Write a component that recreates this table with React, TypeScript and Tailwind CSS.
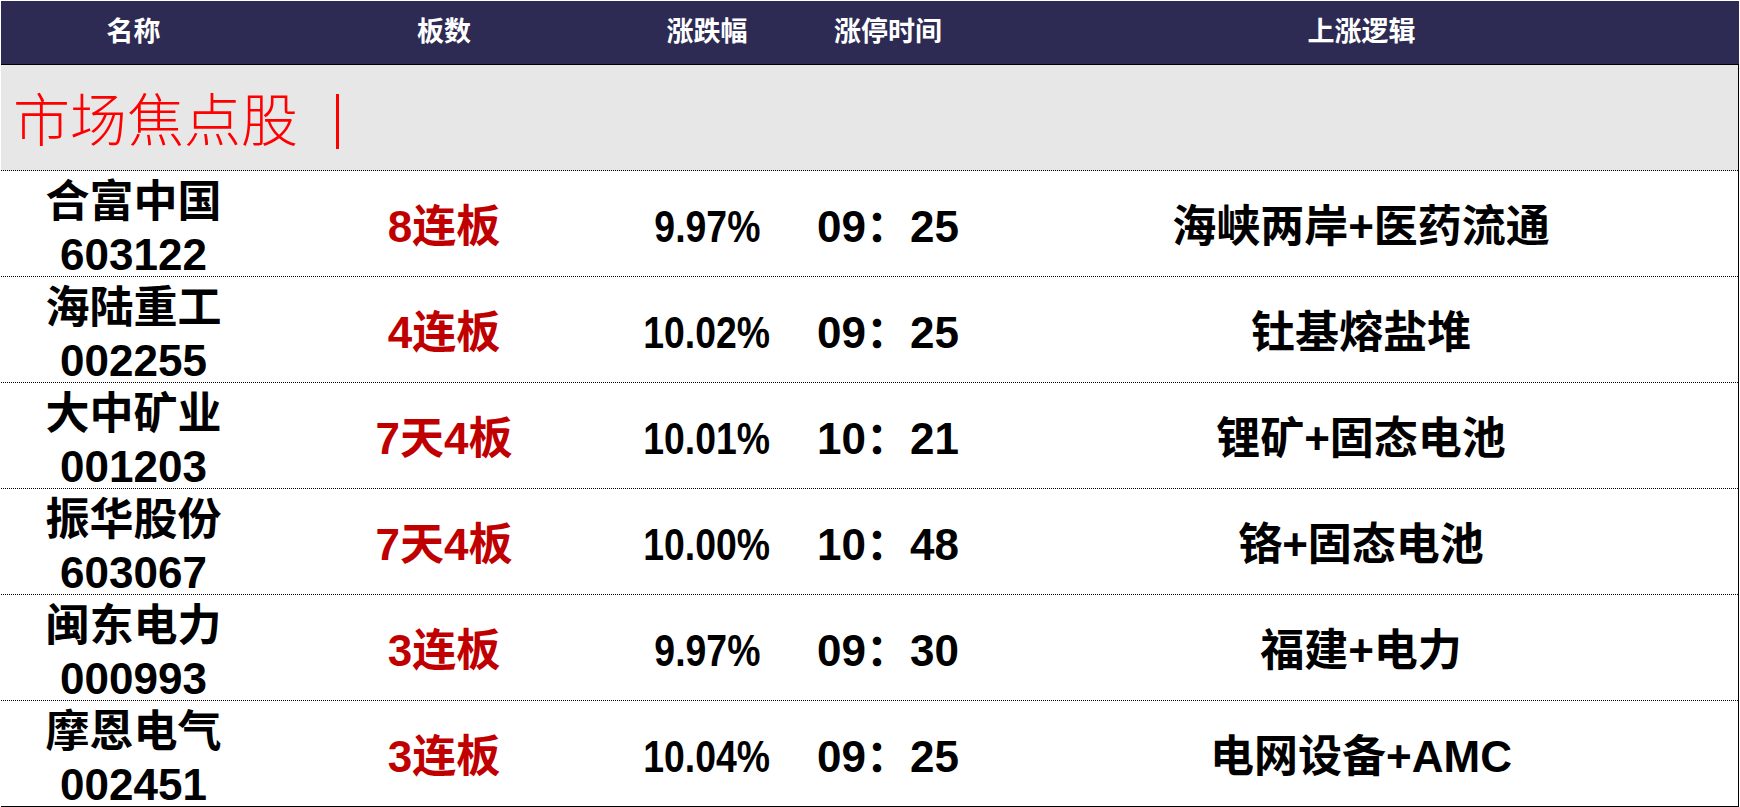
const rows = [
  { name: '合富中国', code: '603122', board: '8连板', pct: '9.97%', time: '09：25', logic: '海峡两岸+医药流通' },
  { name: '海陆重工', code: '002255', board: '4连板', pct: '10.02%', time: '09：25', logic: '钍基熔盐堆' },
  { name: '大中矿业', code: '001203', board: '7天4板', pct: '10.01%', time: '10：21', logic: '锂矿+固态电池' },
  { name: '振华股份', code: '603067', board: '7天4板', pct: '10.00%', time: '10：48', logic: '铬+固态电池' },
  { name: '闽东电力', code: '000993', board: '3连板', pct: '9.97%', time: '09：30', logic: '福建+电力' },
  { name: '摩恩电气', code: '002451', board: '3连板', pct: '10.04%', time: '09：25', logic: '电网设备+AMC' },
]

const cols = 'grid grid-cols-[265px_356px_170px_192px_1fr]'

function App() {
  return (
    <div className="w-[1740px] h-[807px] bg-white pt-px pl-px font-['Liberation_Sans','Noto_Sans_CJK_SC',sans-serif]">
      <div className="w-[1738px]">
        <div className={`${cols} items-center h-[64px] bg-[#2d2b53] border-b border-black text-white text-[27px] font-semibold`}>
          <div className="text-center">名称</div>
          <div className="text-center">板数</div>
          <div className="text-center">涨跌幅</div>
          <div className="text-center">涨停时间</div>
          <div className="text-center">上涨逻辑</div>
        </div>
        <div className="border-r border-black">
          <div className="h-[106px] bg-[#e7e7e7] border-b border-dotted border-black flex items-center pl-[12px] pt-[8px]">
            <span className="text-[#ff0000] text-[57px] leading-none font-['Liberation_Serif','Noto_Sans_CJK_SC',serif] font-light">市场焦点股</span>
            <span className="ml-[38px] w-[3px] h-[55px] bg-[#ff0000]"></span>
          </div>
          {rows.map((r, i) => (
            <div
              key={r.code}
              className={`${cols} h-[106px] border-b ${i === rows.length - 1 ? 'border-black' : 'border-dotted border-black'} text-[44px] leading-[44px] font-semibold text-black`}
            >
              <div className="text-center pt-[9px] flex flex-col gap-[9px]">
                <div>{r.name}</div>
                <div>{r.code}</div>
              </div>
              <div className="text-center pt-[34px] text-[#c00000]">{r.board}</div>
              <div className="text-center pt-[34px]">
                <span className="inline-block scale-x-[0.85]">{r.pct}</span>
              </div>
              <div className="text-center pt-[34px]">{r.time}</div>
              <div className="text-center pt-[34px]">{r.logic}</div>
            </div>
          ))}
        </div>
      </div>
    </div>
  )
}

export default App
